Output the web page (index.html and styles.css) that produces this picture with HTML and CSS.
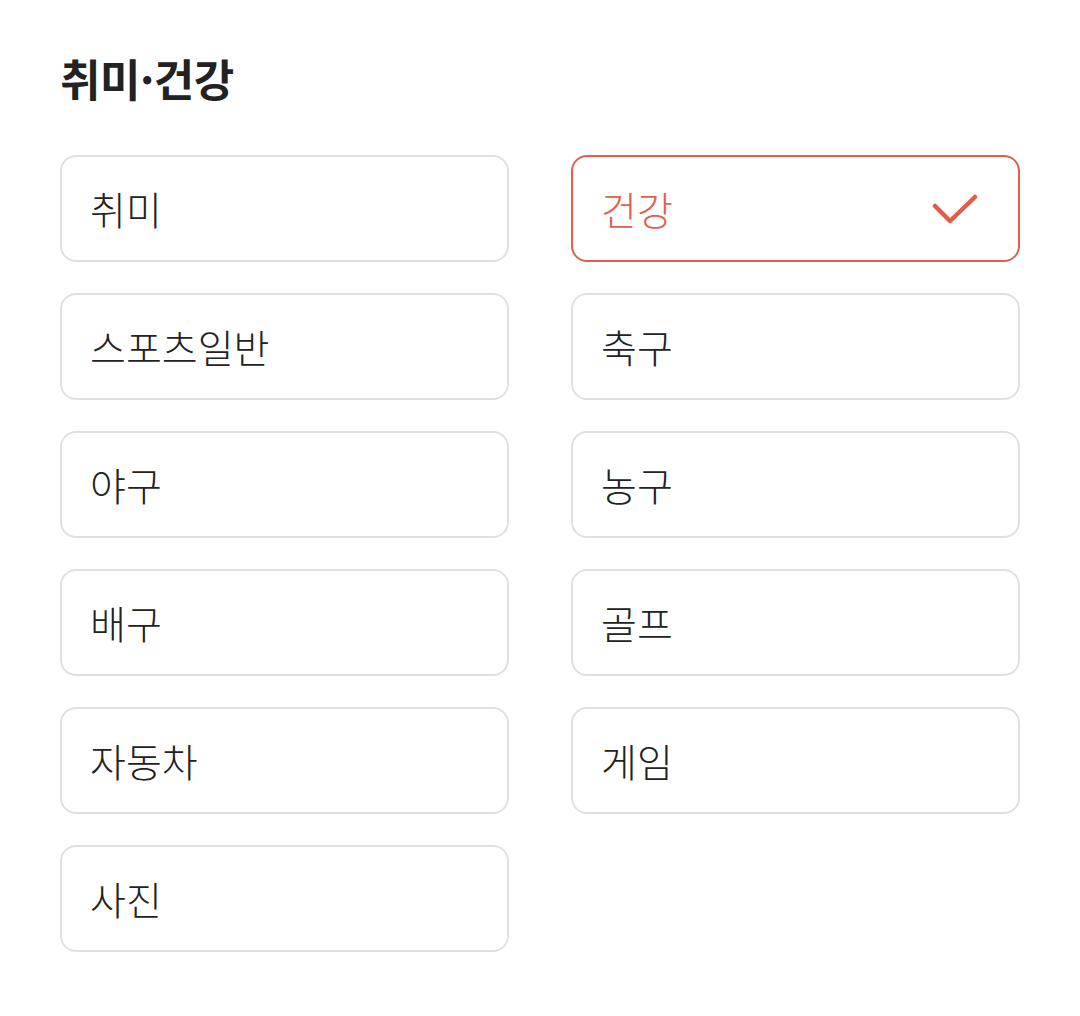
FILE: index.html
```html
<!DOCTYPE html>
<html lang="ko">
<head>
<meta charset="utf-8">
<link rel="stylesheet" href="styles.css">
</head>
<body>
<main class="page">
  <h1 class="title">취미·건강</h1>
  <div class="grid">
    <div class="opt">취미</div>
    <div class="opt selected"><span>건강</span>
      <svg class="check" width="48" height="34" viewBox="0 0 48 34"><path d="M3 14 L18 29 L43 5" fill="none" stroke="#e35c4a" stroke-width="4.5" stroke-linecap="round" stroke-linejoin="round"/></svg>
    </div>
    <div class="opt">스포츠일반</div>
    <div class="opt">축구</div>
    <div class="opt">야구</div>
    <div class="opt">농구</div>
    <div class="opt">배구</div>
    <div class="opt">골프</div>
    <div class="opt">자동차</div>
    <div class="opt">게임</div>
    <div class="opt">사진</div>
  </div>
</main>
</body>
</html>
```
FILE: styles.css
```css
html, body {
  margin: 0;
  padding: 0;
  background: #fff;
}
body {
  font-family: "Noto Sans CJK KR", "Noto Sans", sans-serif;
  color: #222;
}
.page {
  padding: 46px 60px 0 60px;
}
.title {
  margin: 0;
  font-size: 44px;
  font-weight: 700;
  line-height: 64px;
  color: #222;
  letter-spacing: -0.5px;
}
.grid {
  margin-top: 45px;
  display: grid;
  grid-template-columns: 449px 449px;
  column-gap: 62px;
  row-gap: 31px;
}
.opt {
  box-sizing: border-box;
  height: 107px;
  border: 2px solid #e0e0e0;
  border-radius: 16px;
  padding: 0 38px 2px 28px;
  display: flex;
  align-items: center;
  justify-content: space-between;
  font-size: 39px;
  font-weight: 300;
  color: #222;
}
.opt.selected {
  border-color: #e0604e;
  color: #e0604e;
}
.check {
  display: block;
  margin-top: 2px;
}
```
